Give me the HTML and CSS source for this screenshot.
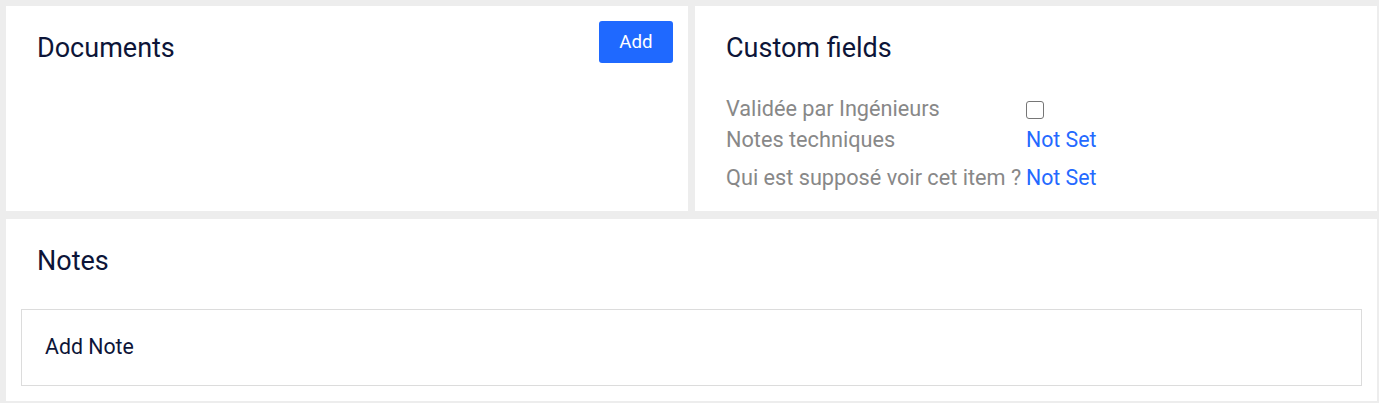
FILE: index.html
```html
<!DOCTYPE html>
<html lang="fr">
<head>
<meta charset="utf-8">
<title>Item</title>
<link rel="stylesheet" href="styles.css">
</head>
<body>
<div class="page">
  <div class="top-row">
    <section class="card">
      <div class="card-header">
        <h2 class="card-title">Documents</h2>
        <button class="btn-primary" type="button">Add</button>
      </div>
    </section>
    <section class="card">
      <div class="card-header">
        <h2 class="card-title">Custom fields</h2>
      </div>
      <div class="fields">
        <div class="field">
          <span class="field-label">Validée par Ingénieurs</span>
          <span class="field-value"><input class="checkbox" type="checkbox"></span>
        </div>
        <div class="field field-spaced">
          <span class="field-label">Notes techniques</span>
          <a class="field-link" href="#">Not Set</a>
        </div>
        <div class="field">
          <span class="field-label">Qui est supposé voir cet item ?</span>
          <a class="field-link" href="#">Not Set</a>
        </div>
      </div>
    </section>
  </div>
  <section class="card notes-card">
    <div class="card-header">
      <h2 class="card-title">Notes</h2>
    </div>
    <div class="note-box">Add Note</div>
  </section>
</div>
</body>
</html>
```
FILE: styles.css
```css
* { box-sizing: border-box; }
html, body { margin: 0; padding: 0; }
body {
  background: #ededed;
  font-family: Roboto, "Liberation Sans", Arial, sans-serif;
  color: #0d1538;
}
.page {
  display: flex;
  flex-direction: column;
  gap: 8px;
  padding: 6px 2px 2px 6px;
}
.top-row {
  display: grid;
  grid-template-columns: 1fr 1fr;
  gap: 7px;
}
.card {
  background: #ffffff;
  padding: 15px;
}
.card-header {
  display: flex;
  align-items: flex-start;
  justify-content: space-between;
}
.card-title {
  margin: 11px 0 0 16px;
  font-size: 27px;
  line-height: 32px;
  font-weight: 400;
  color: #0d1538;
}
.btn-primary {
  width: 74px;
  height: 42px;
  border: none;
  border-radius: 3px;
  background: #1f69ff;
  color: #ffffff;
  font-family: Roboto, "Liberation Sans", Arial, sans-serif;
  font-size: 18.7px;
  padding: 0;
  cursor: pointer;
}
.fields {
  display: flex;
  flex-direction: column;
  margin: 29px 0 3px 16px;
}
.field {
  display: flex;
  align-items: center;
  height: 31px;
}
.field-spaced { margin-bottom: 7px; }
.field-label {
  width: 300px;
  flex: none;
  font-size: 21.7px;
  line-height: 31px;
  color: #888888;
  white-space: nowrap;
}
.field-value {
  display: flex;
  align-items: center;
}
.checkbox {
  appearance: none;
  -webkit-appearance: none;
  width: 18px;
  height: 18px;
  margin: 3px 0 0 0;
  border: 1.6px solid #767676;
  border-radius: 3px;
  background: #fff;
}
.field-link {
  font-size: 21.3px;
  line-height: 31px;
  color: #2469ff;
  text-decoration: none;
}
.notes-card .card-title { margin-bottom: 32px; }
.note-box {
  border: 1px solid #dcdcdc;
  padding: 24px 23px 25px;
  font-size: 21.3px;
  line-height: 26px;
  color: #0d1538;
}
```
